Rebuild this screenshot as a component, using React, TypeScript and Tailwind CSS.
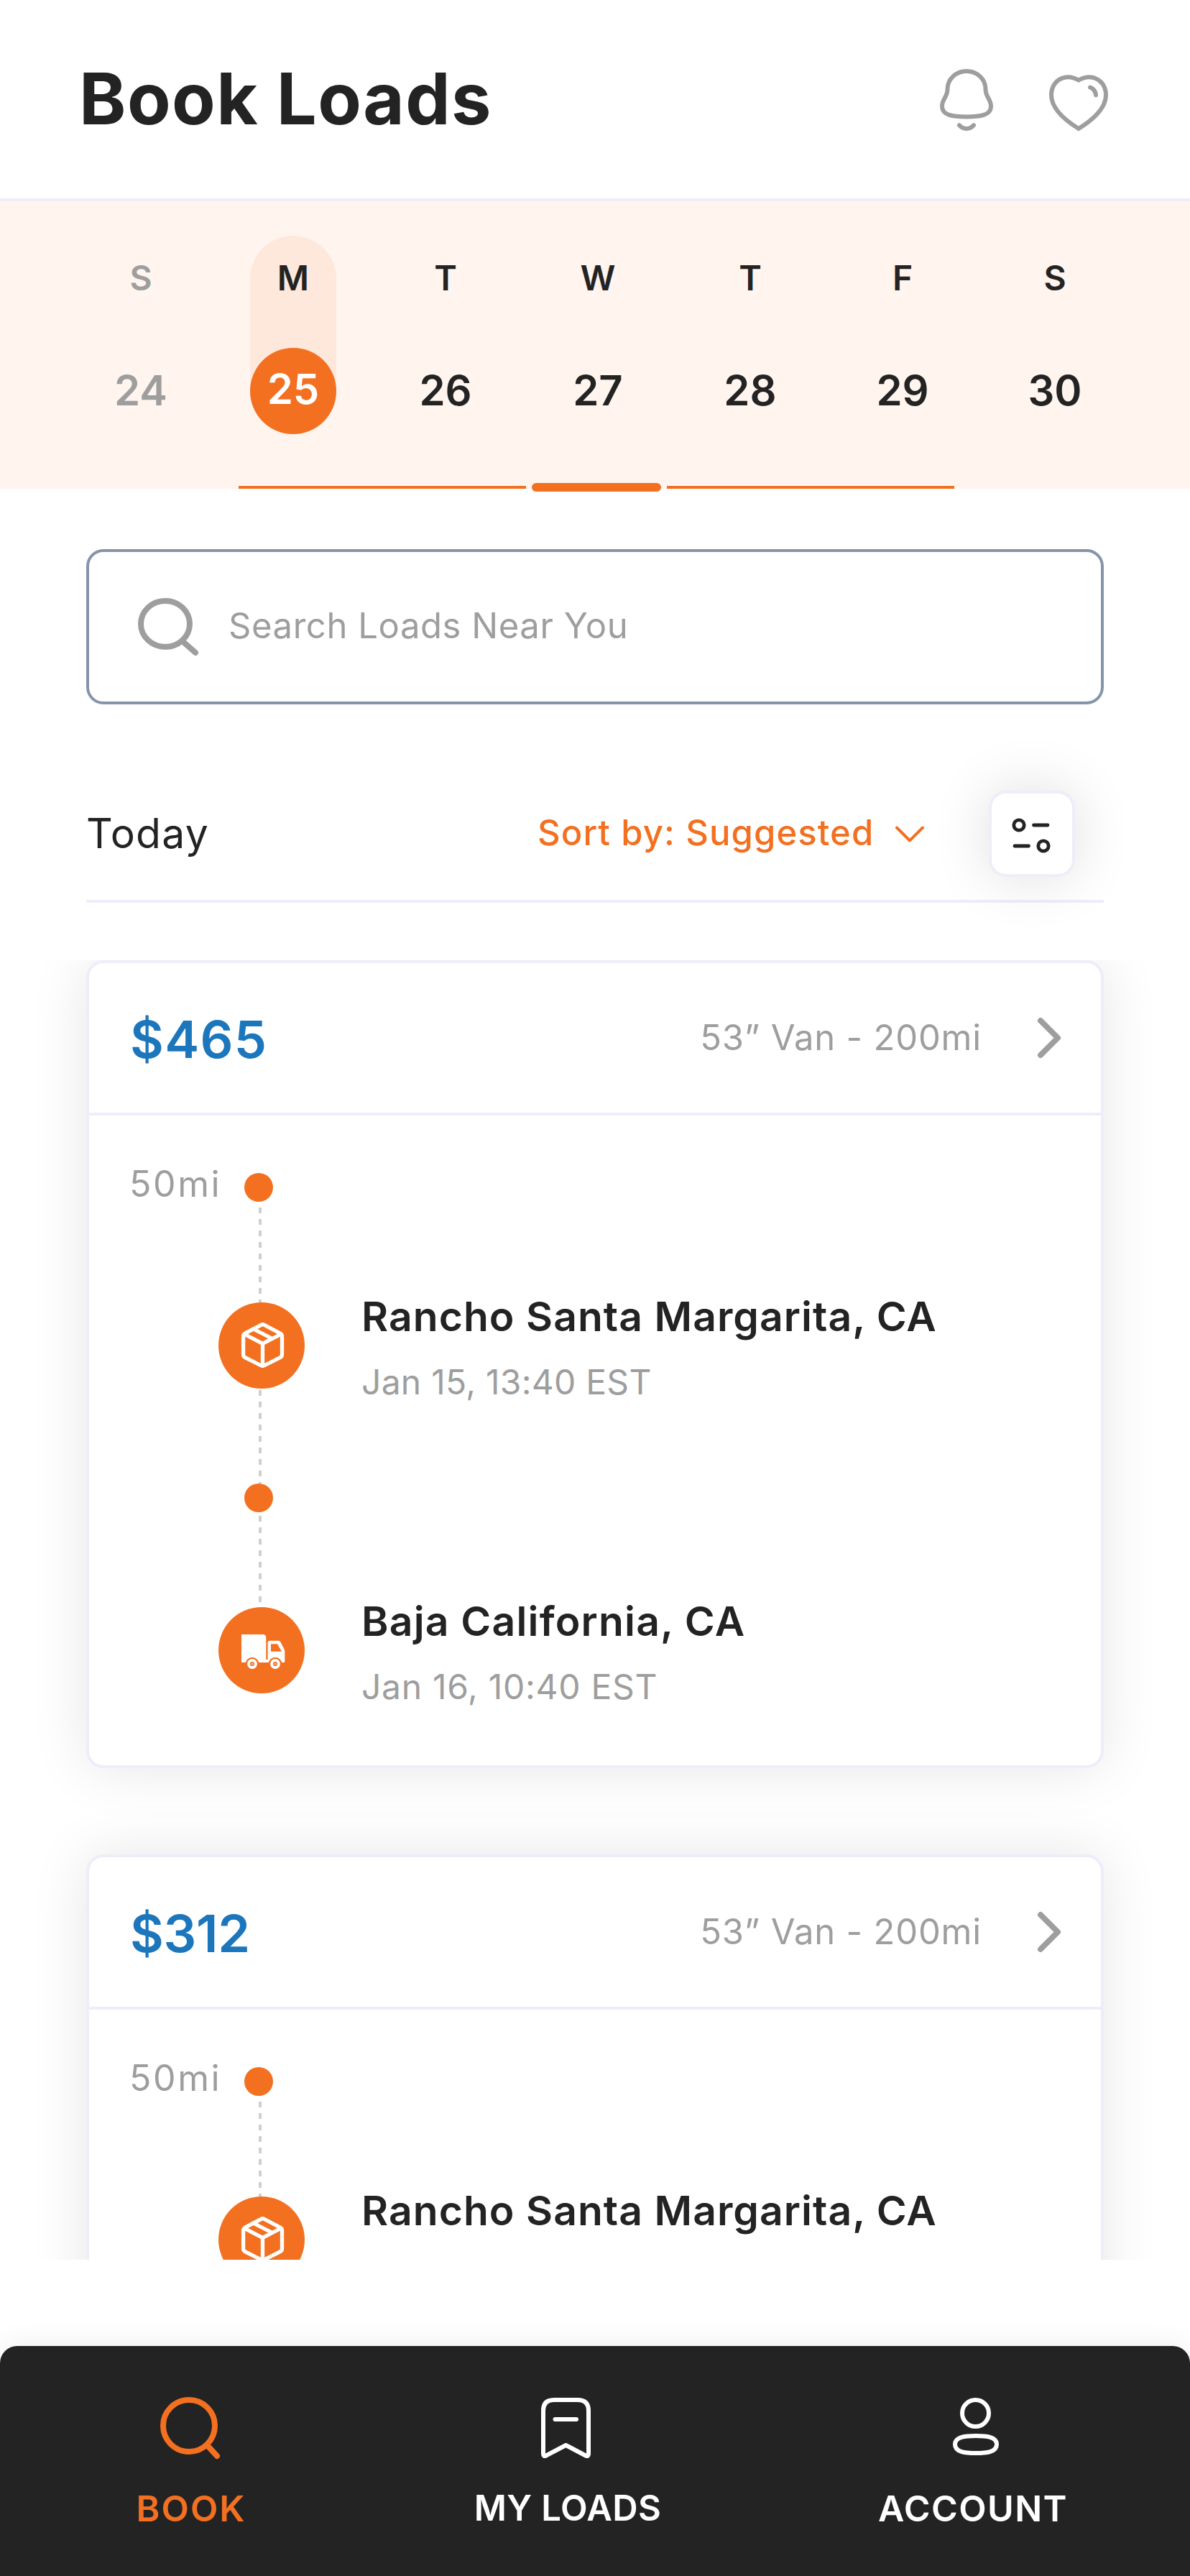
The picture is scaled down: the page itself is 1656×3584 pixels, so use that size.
import type { ReactNode } from "react"

const days = [
  { label: "S", date: 24, state: "past" },
  { label: "M", date: 25, state: "selected" },
  { label: "T", date: 26, state: "open" },
  { label: "W", date: 27, state: "open" },
  { label: "T", date: 28, state: "open" },
  { label: "F", date: 29, state: "open" },
  { label: "S", date: 30, state: "open" },
]

function BellIcon() {
  return (
    <svg className="size-24" viewBox="0 0 96 96" fill="none" stroke="#9e9e9e" strokeWidth="6" strokeLinecap="round">
      <path d="M48 7C33 7 21.5 18.500 21.500 32C21.500 43.500 14 45.500 14 56C14 68.500 29 70.500 48 70.500S82 68.500 82 56C82 45.500 74.500 43.500 74.500 32C74.500 18.500 63 7 48 7Z" />
      <path d="M38 82.300C43.500 88.500 52.500 88.500 58 82.300" />
    </svg>
  )
}

function HeartIcon() {
  return (
    <svg className="size-24" viewBox="0 0 96 96" fill="none" stroke="#9e9e9e" strokeWidth="6" strokeLinecap="round">
      <path d="M48 19.500C41 15.500 35.500 14.600 30 15.500C17 17.700 10 28 10 40C10 58 27 74 48 87C69 74 86 58 86 40C86 28 79 17.700 66 15.500C60.500 14.600 55 15.500 48 19.500Z" />
      <path d="M64 29.500C68.500 31.300 71.500 35.500 72 40.300" />
    </svg>
  )
}

function SearchIcon() {
  return (
    <svg className="size-24 shrink-0" viewBox="0 0 96 96" fill="none" stroke="#9e9e9e" strokeWidth="8" strokeLinecap="round">
      <ellipse cx="46" cy="44" rx="34" ry="32" />
      <path d="M71 69L88 84" />
    </svg>
  )
}

function FilterIcon() {
  return (
    <svg className="size-[112px] shrink-0" viewBox="4 4 112 112" fill="none" stroke="#232323" strokeWidth="4.800" strokeLinecap="round">
      <circle cx="42" cy="48" r="7.200" />
      <path d="M62.500 48H82M36 77H55.500" />
      <circle cx="76" cy="77" r="7.200" />
    </svg>
  )
}

function BoxIcon() {
  return (
    <svg className="size-[120px]" viewBox="0 0 120 120" fill="none" stroke="#fff" strokeWidth="5.300" strokeLinecap="round" strokeLinejoin="round">
      <path d="M59.500 31.300Q61.500 30.200 63.500 31.300L86 43.200Q88.500 44.500 88.500 47.500V72.500Q88.500 75.300 86 76.700L63.500 88Q61.500 89 59.500 88L37 76.700Q34.600 75.300 34.600 72.500V47.500Q34.600 44.500 37 43.200Z" />
      <path d="M36.500 44.500L61.500 57.300L86.500 44.500M61.500 57.300V87M48.500 37L74 50" />
    </svg>
  )
}

function TruckIcon() {
  return (
    <svg className="size-[120px]" viewBox="0 0 120 120">
      <path fill="#fff" d="M32 38H62Q66.300 38 66.300 42.500V73H68.600V50Q68.600 46.700 72 46.700H83Q85.300 46.700 86.500 48.700L91.300 58Q92.300 60 92.300 62V75.500Q92.300 77 90.800 77H32Z" />
      <path fill="#f37021" d="M73 51.300H82L88 61.700H73Z" />
      {[47, 79].map((cx) => (
        <g key={cx}>
          <circle cx={cx} cy="79" r="9.300" fill="#f37021" />
          <circle cx={cx} cy="79" r="6.900" fill="#fff" />
          <circle cx={cx} cy="79" r="3" fill="#f37021" />
          <circle cx={cx} cy="79" r="1" fill="#fff" />
        </g>
      ))}
    </svg>
  )
}

function Calendar() {
  return (
    <section className="flex h-[400px] flex-col justify-between bg-[#fff4ee]">
      <div className="flex pl-[90px] pt-12">
        {days.map((d) => (
          <div key={d.date} className="flex w-[212px] justify-center font-semibold">
            <div
              className={
                d.state === "selected"
                  ? "flex h-[276px] w-[120px] flex-col items-center justify-between rounded-full bg-[#fde8db] text-[#232323]"
                  : d.state === "past"
                    ? "flex h-[276px] w-[120px] flex-col items-center justify-between text-[#9e9e9e]"
                    : "flex h-[276px] w-[120px] flex-col items-center justify-between text-[#232323]"
              }
            >
              <span className="text-[48px] leading-[117px]">{d.label}</span>
              <span
                className={
                  d.state === "selected"
                    ? "size-[120px] rounded-full bg-[#f37021] text-center text-[58px] leading-[115px] text-white"
                    : "size-[120px] text-center text-[58px] leading-[118px]"
                }
              >
                {d.date}
              </span>
            </div>
          </div>
        ))}
      </div>
      <div className="-mb-1 flex h-3 items-center gap-2 pl-[332px]">
        <div className="h-1 w-[400px] bg-[#f37021]" />
        <div className="h-3 w-[180px] rounded-[6px] bg-[#f37021]" />
        <div className="h-1 w-[400px] bg-[#f37021]" />
      </div>
    </section>
  )
}

function Dot() {
  return <div className="ml-9 size-10 rounded-full bg-[#f37021]" />
}

function Stop({ children }: { children: ReactNode }) {
  return <div className="size-[120px] rounded-full bg-[#f37021]">{children}</div>
}

function LoadCard({ price }: { price: string }) {
  return (
    <article className="mx-[120px] h-[1124px] shrink-0 rounded-3xl border-4 border-[#eeedf9] bg-white shadow-[0_0_80px_rgba(0,0,0,0.1)]">
      <div className="flex h-[212px] items-center justify-between border-b-4 border-[#eeedf9] pl-[57px] pr-[52px]">
        <span className={price === "$312" ? "pt-1 text-[72px] font-semibold leading-none tracking-[-0.3px] text-[#1c76bc]" : "pt-1 text-[72px] font-semibold leading-none tracking-[1.3px] text-[#1c76bc]"}>{price}</span>
        <div className="flex items-center gap-[74px]">
          <span className="pb-[2px] text-[49px] leading-none tracking-[0.8px] text-[#9e9e9e]">53” Van - 200mi</span>
          <svg className="h-16 w-10" viewBox="0 0 40 64" fill="none" stroke="#9e9e9e" strokeWidth="8" strokeLinecap="round" strokeLinejoin="round">
            <path d="M8 8L32 32L8 56" />
          </svg>
        </div>
      </div>
      <div className="flex whitespace-nowrap pl-14">
        <span className="w-[124px] pt-[55px] text-[50px] leading-[80px] tracking-[2.6px] text-[#9e9e9e]">50mi</span>
        <div className="w-[120px] pt-20">
          <Dot />
          <div className="ml-14 h-[140px] w-1 bg-[repeating-linear-gradient(to_bottom,transparent_0px,transparent_8px,#cfcfcf_8px,#cfcfcf_16px)]" />
          <Stop>
            <BoxIcon />
          </Stop>
          <div className="ml-14 h-[132px] w-1 bg-[repeating-linear-gradient(to_bottom,transparent_0px,transparent_2px,#cfcfcf_2px,#cfcfcf_10px,transparent_10px,transparent_16px)]" />
          <Dot />
          <div className="ml-14 h-[132px] w-1 bg-[repeating-linear-gradient(to_bottom,transparent_0px,transparent_5px,#cfcfcf_5px,#cfcfcf_13px,transparent_13px,transparent_16px)]" />
          <Stop>
            <TruckIcon />
          </Stop>
        </div>
        <div className="ml-[79px] flex flex-col gap-[253px] pt-60 leading-[80px]">
          <div>
            <div className="text-[57px] font-semibold leading-[80px] tracking-[1.05px] text-[#232323]">Rancho Santa Margarita, CA</div>
            <div className="mt-[11px] text-[48px] leading-[80px] tracking-[0.25px] text-[#9e9e9e]">Jan 15, 13:40 EST</div>
          </div>
          <div>
            <div className="text-[57px] font-semibold leading-[80px] tracking-[1.2px] text-[#232323]">Baja California, CA</div>
            <div className="mt-[11px] text-[48px] leading-[80px] tracking-[0.7px] text-[#9e9e9e]">Jan 16, 10:40 EST</div>
          </div>
        </div>
      </div>
    </article>
  )
}

function BottomNav() {
  return (
    <nav className="mt-[120px] flex h-80 rounded-t-3xl bg-[#232323] pl-[116px] pt-[66px] font-semibold leading-[80px] text-white shadow-[0_0_40px_rgba(0,0,0,0.08)]">
      <div className="flex w-[300px] flex-col items-center gap-6 text-[#f37021]">
        <svg className="size-24" viewBox="0 0 96 96" fill="none" stroke="currentColor" strokeWidth="8" strokeLinecap="round">
          <circle cx="45" cy="45" r="36" />
          <path d="M72 74L84 87" />
        </svg>
        <span className="text-[50px] leading-[80px] tracking-[2px]">BOOK</span>
      </div>
      <div className="ml-[222px] flex w-[304px] flex-col items-center gap-6">
        <svg className="size-24" viewBox="0 0 96 96" fill="none" stroke="currentColor" strokeWidth="6" strokeLinecap="round" strokeLinejoin="round">
          <path d="M14 84V24Q14 9 29 9H62Q77 9 77 24V84Q77 88.500 73 86.500L45.500 72L18 86.500Q14 88.500 14 84Z" />
          <path d="M30.500 36H60" />
        </svg>
        <span className="text-[49px] leading-[80px] tracking-[0.4px]">MY LOADS</span>
      </div>
      <div className="ml-[262px] flex w-[300px] flex-col items-center gap-6">
        <svg className="size-24" viewBox="0 0 96 96" fill="none" stroke="currentColor" strokeWidth="6">
          <circle cx="51.500" cy="27.500" r="18.500" />
          <path d="M52 59C38 59 23 60 23 71S38 83 52 83S81 82 81 71S66 59 52 59Z" />
        </svg>
        <span className="text-[50px] leading-[80px] tracking-[1.4px]">ACCOUNT</span>
      </div>
    </nav>
  )
}

export default function App() {
  return (
    <div className="flex h-[3584px] w-[1656px] flex-col overflow-hidden bg-white font-['Inter','Liberation_Sans',sans-serif]">
      <header className="flex h-[280px] shrink-0 items-center justify-between border-b-4 border-[#eeedf9] pl-[110px] pr-[107px]">
        <h1 className="pb-[2px] text-[99px] font-bold leading-none tracking-[1.4px] text-[#232323]">Book Loads</h1>
        <div className="flex gap-[60px] pt-1">
          <BellIcon />
          <HeartIcon />
        </div>
      </header>

      <Calendar />

      <div className="mx-[120px] mt-[84px] flex h-[216px] shrink-0 items-center rounded-3xl border-4 border-[#8694aa] pl-[60px]">
        <SearchIcon />
        <span className="ml-[38px] pb-[3px] text-[49px] leading-none tracking-[0.55px] text-[#9e9e9e]">Search Loads Near You</span>
      </div>

      <div className="mx-[120px] mt-[120px] flex h-[156px] shrink-0 items-start justify-between border-b-4 border-[#eeedf9] pr-10">
        <span className="text-[57px] leading-[119px] tracking-[1.3px] text-[#232323]">Today</span>
        <div className="flex items-center gap-[86px]">
          <div className="flex w-[542px] items-center justify-between text-[#f37021]">
            <span className="pb-[3px] text-[49px] font-[450] leading-none tracking-[1.1px]">Sort by: Suggested</span>
            <svg className="size-12" viewBox="0 0 48 48" fill="none" stroke="currentColor" strokeWidth="4" strokeLinecap="round" strokeLinejoin="round">
              <path d="M6 15.500L24 33.500L42 15.500" />
            </svg>
          </div>
          <div className="size-[120px] rounded-3xl border-4 border-[#eeedf9] bg-white shadow-[0_0_80px_rgba(0,0,0,0.13)]">
            <FilterIcon />
          </div>
        </div>
      </div>

      <main className="mt-20 flex h-[1808px] shrink-0 flex-col gap-[120px] overflow-hidden">
        <LoadCard price="$465" />
        <LoadCard price="$312" />
      </main>

      <BottomNav />
    </div>
  )
}
